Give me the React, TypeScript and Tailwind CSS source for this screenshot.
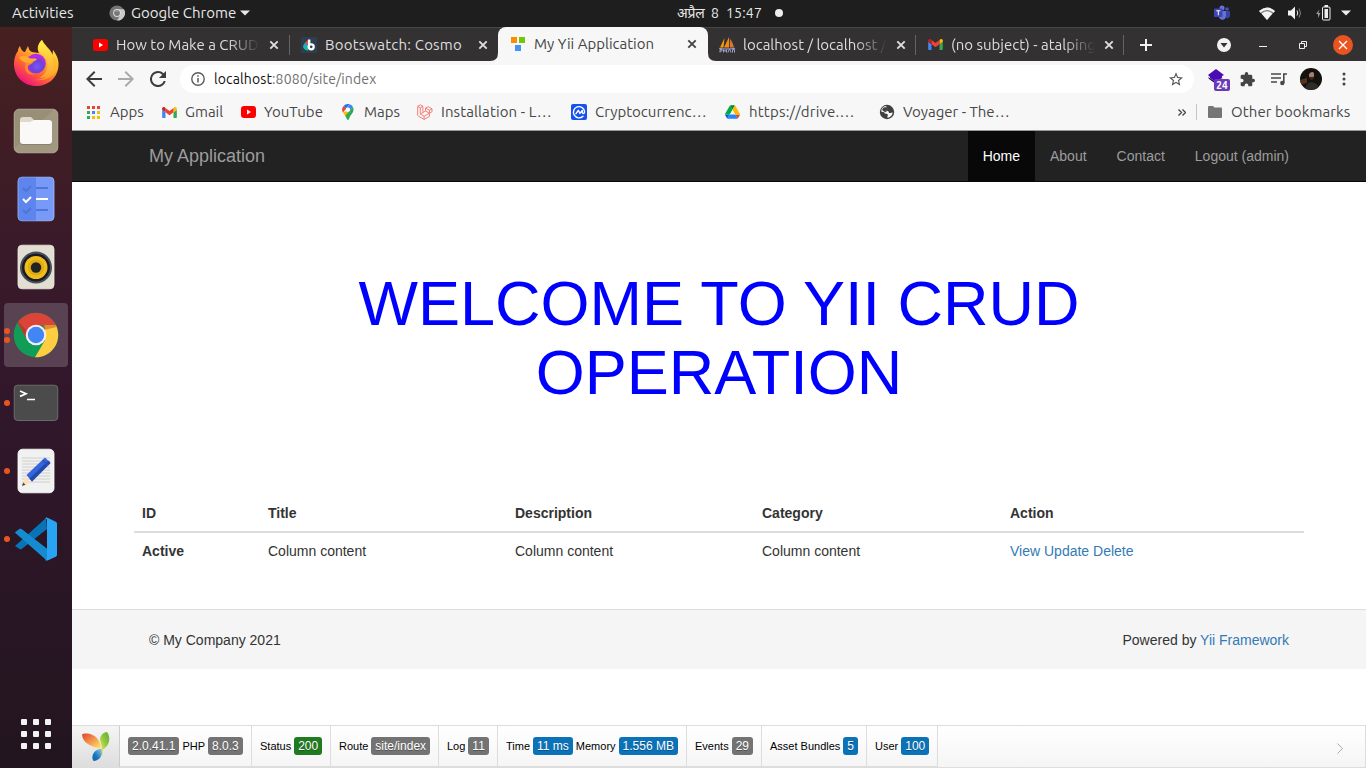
import React from "react";

type P = { className?: string };
type LabelProps = { children: React.ReactNode; className?: string };

const ui = "font-['Ubuntu','Noto_Sans',sans-serif] whitespace-pre";

function Label({ children, className = "" }: LabelProps) {
  return <span className={`${ui} ${className}`}>{children}</span>;
}

/* ---------- small icons ---------- */

function YouTube({ className }: P) {
  return (
    <svg viewBox="0 0 15 12" className={className}>
      <rect width="15" height="12" rx="3" fill="#f00" />
      <path d="M6 3.6 10 6 6 8.4Z" fill="#fff" />
    </svg>
  );
}

function Gmail({ className }: P) {
  return (
    <svg viewBox="52 42 88 66" className={className}>
      <path fill="#4285f4" d="M58 108h14V74L52 59v43c0 3.32 2.69 6 6 6" />
      <path fill="#34a853" d="M120 108h14c3.32 0 6-2.69 6-6V59l-20 15" />
      <path fill="#fbbc04" d="M120 48v26l20-15v-8c0-7.42-8.47-11.65-14.4-7.2" />
      <path fill="#ea4335" d="M72 74V48l24 18 24-18v26L96 92" />
      <path fill="#c5221f" d="M52 51v8l20 15V48l-5.600-4.200c-5.940-4.450-14.400-.22-14.400 7.200" />
    </svg>
  );
}

function Bootswatch() {
  return (
    <svg viewBox="0 0 16 16" className="size-4 shrink-0">
      <rect width="16" height="16" rx="1" fill="#2c3e50" />
      <path d="M7 2.500 4 6l3 2Z" fill="#e95420" />
      <path d="M4 5.500 2 9l5 1V8Z" fill="#3498db" />
      <path d="M2 9l5-.5v5C4.500 13.500 2 11.500 2 9Z" fill="#18bc9c" />
      <path d="M8.200 2.500v8" stroke="#fff" strokeWidth="2.400" />
      <circle cx="10.200" cy="9.800" r="2.500" fill="#2c3e50" stroke="#fff" strokeWidth="2.300" />
    </svg>
  );
}

function YiiSquares() {
  return (
    <svg viewBox="0 0 16 16" className="size-4 shrink-0">
      <path fill="#ff8c00" d="M1 1h6v6H1z" />
      <path fill="#73c800" d="M9 1h6v6H9z" />
      <path fill="#4195f5" d="M5 9h6v6H5z" />
    </svg>
  );
}

function PhpMyAdmin() {
  return (
    <svg viewBox="0 0 16 16" className="size-4 shrink-0">
      <path d="M5.500 1 1 10.500h3.500Z" fill="#f89c0e" />
      <path d="M10 0 5 10.500h5Z" fill="#f58a12" />
      <path d="M10.800 1.500c2 2.500 3.200 5 4.200 9h-4.200Z" fill="#d9782d" />
      <path d="M0 11.300c5 1 11 .8 16 0M1 15.500v-3h2v1.500H1m3.500 1.500v-3l1.500 2 1.500-2v3m1.500 0 1-3h1l1 3m1.500 0v-3h2v3" fill="none" stroke="#9c9dc8" strokeWidth="1" />
    </svg>
  );
}

function CloseX({ className = "" }: P) {
  return (
    <svg viewBox="0 0 10 10" className={`size-[10px] shrink-0 ${className}`}>
      <path d="m1.300 1.300 7.400 7.400m0-7.400L1.300 8.700" fill="none" stroke="currentColor" strokeWidth="1.900" />
    </svg>
  );
}

function ChromeMono() {
  return (
    <svg viewBox="0 0 16 16" className="size-4">
      <circle cx="8" cy="8" r="7.600" fill="#757575" />
      <path d="M8 4.200h7A7.600 7.600 0 0 1 8 15.600L11.300 10Z" fill="#c9c9c9" />
      <circle cx="8" cy="8" r="3.900" fill="#ddd" />
      <circle cx="8" cy="8" r="2.900" fill="#777" />
      <path d="M6.500 6.500a2 2 0 0 1 3 0" stroke="#aaa" fill="none" />
    </svg>
  );
}

function MapPin() {
  return (
    <svg viewBox="0 0 12 16" className="h-4 w-3">
      <path d="M6 0a5.700 5.700 0 0 0-4.400 2L4 4.200 7.700.3A6 6 0 0 0 6 0Z" fill="#1a73e8" />
      <path d="M1.600 2A5.700 5.700 0 0 0 .9 8.500L4.300 4.400Z" fill="#ea4335" />
      <path d="M7.700.3 4.200 4.500A2.200 2.200 0 0 1 7.700 7.100L11 3.100A5.700 5.700 0 0 0 7.700.3Z" fill="#4285f4" />
      <path d="M4.200 7.200.9 8.500c.5 1 1.500 2.200 2.200 3.200L7.700 7.100A2.200 2.200 0 0 1 4.200 7.200Z" fill="#fbbc04" />
      <path d="M11 3.100 3.100 11.700C4.500 13.500 5 16 6 16c1.100 0 1.300-3 3.200-5.200C11 8.500 12.300 6 11 3.100Z" fill="#34a853" />
      <circle cx="6" cy="5.700" r="2.100" fill="#fff" />
    </svg>
  );
}

function Laravel() {
  return (
    <svg viewBox="0 0 16 16" className="size-4">
      <path d="m.7 2.300 2.600-1.500 2.600 1.500v6.200l2.600-1.500V4.100l2.700-1.500 3.800 2.200v3l-2.600 1.500v3.100l-5.300 3-5.700-3.200-.7-.8Zm0 0 2.600 1.500 2.600-1.500M3.300 3.800v6.200l2.600-1.500m-2.600 1.500 3.800 2.200 5.300-3-3.900-2.200m3.900 2.200V6.200l2.600-1.400m-2.600 1.400L8.500 4.100M7.100 12.200v3.200" fill="none" stroke="#f4736b" strokeWidth=".9" />
    </svg>
  );
}

function Coin() {
  return (
    <svg viewBox="0 0 16 16" className="size-4">
      <rect width="16" height="16" rx="2" fill="#1652f0" />
      <path d="M12 12.200a5.600 5.600 0 1 1 1.600-4.400c0 2-2.300 2.200-2.300.4V6.500L9 9.400 7.300 6.300 5 9.700" fill="none" stroke="#fff" strokeWidth="1.400" strokeLinecap="round" strokeLinejoin="round" />
    </svg>
  );
}

function Drive() {
  return (
    <svg viewBox="0 0 87.300 78" className="h-[14px] w-[15px]">
      <path d="m6.600 66.850 3.850 6.650c.8 1.400 1.950 2.500 3.300 3.300L27.500 53H0c0 1.550.4 3.100 1.200 4.500z" fill="#0066da" />
      <path d="M43.650 25 29.900 1.200a9 9 0 0 0-3.300 3.300L1.200 48.500A9 9 0 0 0 0 53h27.500z" fill="#00ac47" />
      <path d="M73.550 76.800a9 9 0 0 0 3.300-3.300l9.250-16A9 9 0 0 0 87.300 53H59.800l5.850 11.500z" fill="#ea4335" />
      <path d="M43.650 25 57.400 1.200C56.050.4 54.500 0 52.900 0H34.400c-1.600 0-3.150.45-4.500 1.200z" fill="#00832d" />
      <path d="M59.800 53H27.500L13.750 76.800c1.350.8 2.900 1.200 4.500 1.200h50.800c1.600 0 3.150-.45 4.500-1.200z" fill="#2684fc" />
      <path d="M73.400 26.500 60.700 4.500a9 9 0 0 0-3.300-3.300L43.650 25 59.800 53h27.450c0-1.550-.4-3.100-1.200-4.500z" fill="#ffba00" />
    </svg>
  );
}

function Globe() {
  return (
    <svg viewBox="0 0 16 16" className="size-4">
      <circle cx="8" cy="8" r="7.200" fill="#3f3f3f" />
      <path d="M9 3.600c0 1.700-3.600 1-3.600 2.300 0 .9 3.600.6 4.100 1.500.4.800.2 1.700 1.700 1.700 1 0 1.200-.6 2.500-.6-.4 2.700-2.200 4.700-4.700 5.200-.9-.3-.8-1.500-.2-2.300.5-1.200-.8-1.700-2-1.700-1.500 0-1-1.500-2.500-1.700l-2-.3c-.2-3 1.600-5 3.900-5.600Z" fill="#f7f7f7" />
      <path d="M4.500 3.500 9 3l.3 1.500-2.800.7-.8 1 2.500.8-2 1.200L3 6Z" fill="#3f3f3f" />
    </svg>
  );
}

/* ---------- dock icons ---------- */

function Firefox() {
  return (
    <svg viewBox="0 0 46 48" className="h-12 w-[46px]">
      <defs>
        <linearGradient id="ffBody" x1="0.800" y1="0.100" x2="0.250" y2="0.950">
          <stop offset="0" stopColor="#ffe43d" />
          <stop offset=".35" stopColor="#ffb12c" />
          <stop offset=".65" stopColor="#ff6534" />
          <stop offset="1" stopColor="#f0147a" />
        </linearGradient>
        <radialGradient id="ffGlobe" cx=".55" cy=".65">
          <stop offset="0" stopColor="#7a55ff" />
          <stop offset=".6" stopColor="#6e42d4" />
          <stop offset="1" stopColor="#b72ae8" />
        </radialGradient>
        <linearGradient id="ffTail" x1="0" y1="0" x2="0" y2="1">
          <stop offset="0" stopColor="#fff14c" />
          <stop offset="1" stopColor="#ffa02d" />
        </linearGradient>
      </defs>
      <path d="M1 26C.8 20 3 14 5 12c0-3 1.500-4 2-5 1 4 3 6 5 6l3-6c1 4 2 5 4 6l7 1C23 9 26 3 29 1c2 5 9 9 10.500 15l.5-5c3 4 6 9 5.500 15C45 39 35 47 23 47S1.500 38 1 26Z" fill="url(#ffBody)" />
      <path d="M29 1c-4 4-5 9-2 13 6 4 9 9 7 15-1 5-4 8-8 10 9 0 15-6 16-14 1-10-10-15-13-24Z" fill="url(#ffTail)" />
      <path d="M39 16c5 13-3 25-17 25 10 1 20-3 22-12 1-6-2-10-5-13Z" fill="#ffb52a" opacity=".7" />
      <circle cx="23" cy="24.500" r="9.800" fill="url(#ffGlobe)" />
      <path d="M13 22c3 1 5 0 7 1 0 2-3 2-5 4-1 4 2 8 7 8-6 2-10-2-10-7Z" fill="#ff8a2b" />
      <path d="M6 18c4-2 8-1 10 1 3 1 6 0 8 1-2 3-6 3-8 4-4 0-8-2-10-6Z" fill="#ffab2e" />
    </svg>
  );
}

function Files() {
  return (
    <svg viewBox="0 0 46 46" className="size-[46px]">
      <rect x="1.200" y="1.200" width="43.600" height="43.600" rx="5" fill="#a09880" stroke="#bdb7a6" strokeWidth=".8" />
      <path d="M2 40 40 2H6Q2 2 2 6Z" fill="#91886f" opacity=".6" />
      <path d="M7 12q0-3 3-3h8l4 4v7H7Z" fill="#ded9ca" />
      <path d="M7 15h10l4-3h15q3 0 3 3v19q0 3-3 3H10q-3 0-3-3Z" fill="#6d654f" opacity=".45" />
      <path d="M7 14h10l4-2h15q3 0 3 3v18q0 3-3 3H10q-3 0-3-3Z" fill="#faf9f7" />
    </svg>
  );
}

function Todo() {
  return (
    <svg viewBox="0 0 38 46" className="h-[46px] w-[38px]">
      <rect x="1" y="1.200" width="36" height="43.600" rx="4" fill="#779af8" stroke="#a4bffd" strokeWidth=".8" />
      <path d="M1.500 5q0-3.500 4-3.500h13.500v43H5.500q-4 0-4-4Z" fill="#5e85ee" />
      <g fill="none" strokeWidth="2">
        <path d="m6 12 3 3 5-5m5 2h12M6 34l3 3 5-5m5 2h12" stroke="#4f76d6" />
        <path d="m6 23 3 3 5-5m5 2h12" stroke="#fff" />
      </g>
    </svg>
  );
}

function Speaker() {
  return (
    <svg viewBox="0 0 38 46" className="h-[46px] w-[38px]">
      <rect x="1" y="1.200" width="36" height="43.600" rx="4" fill="#e2ded2" stroke="#eeeadf" strokeWidth=".8" />
      <circle cx="19" cy="23.500" r="16" fill="#4b5058" />
      <circle cx="19" cy="23.500" r="14" fill="#191b2b" />
      <circle cx="19" cy="23.500" r="11.500" fill="#f1bd16" />
      <circle cx="19" cy="23.500" r="8" fill="#deac1a" />
      <circle cx="19" cy="23.500" r="5.200" fill="#222" />
    </svg>
  );
}

function Chrome() {
  return (
    <svg viewBox="0 0 46 46" className="size-[46px]">
      <circle cx="23" cy="23" r="22.300" fill="#109d58" />
      <path d="M4.500 10.700A22.300 22.300 0 0 1 42.800 13H23L14 28Z" fill="#db4437" />
      <path d="M42.800 13A22.300 22.300 0 0 1 22 45.300L32 28.200 31.500 13Z" fill="#ffcd40" />
      <path d="M23 13h19.800l.7 2L31 18Z" fill="#b5562b" opacity=".5" />
      <path d="m14 28-9.500-17.300 1-1L15 20Z" fill="#8f352e" opacity=".5" />
      <circle cx="23" cy="23" r="10.300" fill="#f1f1f1" />
      <circle cx="23" cy="23" r="8.200" fill="#4285f4" />
    </svg>
  );
}

function Terminal() {
  return (
    <svg viewBox="0 0 46 38" className="h-[38px] w-[46px]">
      <rect x="1.200" y="1.200" width="43.600" height="35.300" rx="3.500" fill="#4b4b4b" stroke="#777" strokeWidth=".8" />
      <path d="m7 7 6 2.700-6 2.700M14 15.500h8" fill="none" stroke="#fff" strokeWidth="1.700" />
    </svg>
  );
}

function Editor() {
  return (
    <svg viewBox="0 0 38 46" className="h-[46px] w-[38px]">
      <rect x="1" y="1.200" width="36" height="43.600" rx="4.500" fill="#f1f1f1" stroke="#fff" strokeWidth=".8" />
      <path d="M5 10h28M5 13h28M5 16h28M5 19h28M5 22h28M5 25h28M5 28h28M5 31h28M5 34h28" stroke="#cecece" />
      <path d="m5 38 3-9 6 6Z" fill="#ffe0bd" />
      <path d="m5 38 1.200-3.500 2.300 2.300Z" fill="#444" />
      <path d="M9.500 27 28 9.500l5.500 5.500-18.500 18.500Z" fill="#3465dd" />
      <path d="m12.500 30.500 19-18 2 2.500L15 33.500Z" fill="#214aaa" />
      <path d="m25.500 12 5.500 5.500" stroke="#2b55bd" strokeWidth="1.500" />
    </svg>
  );
}

function VSCode() {
  return (
    <svg viewBox="0 0 44 44" className="size-11">
      <path d="M1 15.500 5.500 12q1-.6 2.200.2L33 32v11Z" fill="#0a78bd" />
      <path d="M1 29 32 1l1 11L7.700 32q-1.200.8-2.200 0L1 29Z" fill="#0873b5" />
      <path d="M1 15.500 5.500 12q1-.6 2.200.2L33 31.700V43q-1 0-2.500-1.500Z" fill="#168bd0" />
      <path d="M31 1.500q1-1.300 2.500-.8l8.300 4q1.200.6 1.200 2v31q0 1.400-1.200 2l-8.300 3.700q-1.500.6-2.500-.7 2 .5 2-1.700V3.300q0-2-2-1.800Z" fill="#29a4f4" />
    </svg>
  );
}

function YiiLogo() {
  return (
    <svg viewBox="0 0 29 31" className="h-[31px] w-[29px]">
      <defs>
        <linearGradient id="yo" x1="0" y1="0" x2="1" y2="1"><stop stopColor="#df422b" /><stop offset=".45" stopColor="#f48e4c" /><stop offset="1" stopColor="#fff06b" /></linearGradient>
        <linearGradient id="yg" x1="1" y1="0" x2="0" y2="1"><stop stopColor="#5eac37" /><stop offset=".5" stopColor="#92c83e" /><stop offset="1" stopColor="#e2e65b" /></linearGradient>
        <linearGradient id="yb" x1="1" y1="0" x2="0" y2="1"><stop stopColor="#9bc9e8" /><stop offset=".6" stopColor="#1777bc" /><stop offset="1" stopColor="#0864a8" /></linearGradient>
      </defs>
      <path d="M1 3.500C4 1.500 13 2.500 17 8.500c2 3 3.200 6 3.200 9.500C12 16 1.500 13 1 3.500Z" fill="url(#yo)" />
      <path d="M26 1c4 5 3 14-5 18 .2-5-1.500-8-2-10 0-4 3-8 7-8Z" fill="url(#yg)" />
      <path d="M21 18c1 7-3 12-8.500 12-3.500-5 1.500-13 8.500-12Z" fill="url(#yb)" />
      <path d="m20 18 1.500 1-.3 7Z" fill="#c4d84b" />
    </svg>
  );
}

/* ---------- desktop ---------- */

function TopBar() {
  return (
    <header className="flex h-[27px] shrink-0 items-center bg-[#1e1e1e] pb-px text-[15px] text-[#e8e8e8]">
      <Label className="w-[109px] pt-px pl-3">Activities</Label>
      <ChromeMono />
      <Label className="w-[109px] pt-px pl-[6px]">Google Chrome</Label>
      <svg viewBox="0 0 10 6" className="ml-[6px] h-[6px] w-[10px]"><path d="M0 .5h10L5 5.500Z" fill="#e8e8e8" /></svg>
      <div className="ml-[427px] flex w-[86px] items-center text-[14px]">
        <Label className="w-[34px] tracking-[-0.200px]">अप्रैल</Label>
        <Label className="w-[15px]">8</Label>
        <Label className="tracking-[0.200px]">15:47</Label>
      </div>
      <i className="ml-[12px] size-2 rounded-full bg-[#eee]" />
      <svg viewBox="0 0 16 16" className="ml-[431px] size-4 shrink-0">
        <circle cx="8" cy="3" r="2.500" fill="#6772dd" /><circle cx="13" cy="4" r="1.800" fill="#4953b5" />
        <path d="M11 6h5v5q-1 3-4 2Z" fill="#3941a4" /><path d="M4 6h8v5q-1 5-5 3.500Q4 13 4 6Z" fill="#6670d8" />
        <rect y="3.500" width="8.500" height="8.500" rx="1" fill="#3e45b4" /><path d="M2.300 5.800h4M4.300 5.800v4.500" stroke="#fff" />
      </svg>
      <svg viewBox="0 0 16 13" className="ml-[29px] h-[13px] w-4"><path d="M0 4Q8-3 16 4L8 13Z" fill="#777" /><path d="M2.500 6.500Q8 2 13.500 6.500L8 13Z" fill="#f2f2f2" /><path d="M0 4Q8-3 16 4l-1.500 1.700Q8 .5 1.500 5.700Z" fill="#f2f2f2" /></svg>
      <svg viewBox="0 0 16 14" className="ml-[12px] h-[14px] w-4"><path d="M1 4.500h3L8 .5v13l-4-4H1Z" fill="#f2f2f2" /><path d="M10 4.500q1.500 2.500 0 5" fill="none" stroke="#eee" /><path d="M12 2.500q3 4.500 0 9" fill="none" stroke="#888" /></svg>
      <svg viewBox="0 0 15 16" className="ml-[13px] h-4 w-[15px]"><path d="M3.500 4.500 0 9h2v4l2.500-5h-2Z" fill="#999" /><rect x="6.500" y="2" width="7.500" height="13" rx="1" fill="none" stroke="#eee" /><path d="M8.500 4h3.500v9H8.500ZM8.500 0h3.500v2H8.500z" fill="#eee" /></svg>
      <svg viewBox="0 0 10 6" className="ml-[10px] h-[6px] w-[10px]"><path d="M0 .5h10L5 5.500Z" fill="#eee" /></svg>
    </header>
  );
}

function DockItem({ children, dots = 0, active = false }: { children: React.ReactNode; dots?: number; active?: boolean }) {
  return (
    <div className="flex h-[68px] w-full items-center">
      <div className={`ml-1 flex h-16 w-16 items-center rounded-[4px] ${active ? "bg-[#594353]" : ""}`}>
        <div className="flex w-2 shrink-0 flex-col gap-[3px]">
          {Array.from({ length: dots }, (_, i) => <i key={i} className="size-[6px] rounded-full bg-[#e95420]" />)}
        </div>
        <div className="flex flex-1 justify-center pr-2">{children}</div>
      </div>
    </div>
  );
}

function Dock() {
  return (
    <aside className="flex w-[72px] shrink-0 flex-col bg-linear-to-b from-[#472020] via-[#33172c] via-45% to-[#22151f] pt-[2px]">
      <DockItem><Firefox /></DockItem>
      <DockItem><Files /></DockItem>
      <DockItem><Todo /></DockItem>
      <DockItem><Speaker /></DockItem>
      <DockItem dots={2} active><Chrome /></DockItem>
      <DockItem dots={1}><Terminal /></DockItem>
      <DockItem dots={1}><Editor /></DockItem>
      <DockItem dots={1}><VSCode /></DockItem>
      <div className="mt-auto mb-[19px] ml-[21px] grid w-[30px] grid-cols-3 gap-[6px]">
        {Array.from({ length: 9 }, (_, i) => <i key={i} className="size-[6px] rounded-[1px] bg-[#f2f2f2]" />)}
      </div>
    </aside>
  );
}

/* ---------- browser ---------- */

type TabProps = { icon: React.ReactNode; children: React.ReactNode; width: string; sep?: boolean; fade?: boolean; pad?: string; tracking?: string };

function Tab({ icon, children, width, sep, fade, pad = "pl-3", tracking = "" }: TabProps) {
  return (
    <div className={`flex shrink-0 items-center ${width} ${pad}`}>
      <span className="flex w-4 shrink-0 justify-center">{icon}</span>
      <span className={`ml-2 w-[144px] overflow-hidden ${fade ? "[mask-image:linear-gradient(to_right,#000_78%,transparent)]" : ""}`}>
        <Label className={`text-[15px] ${tracking}`}>{children}</Label>
      </span>
      <CloseX className="ml-[9px]" />
      {sep && <i className="ml-auto h-5 w-px bg-[#656364]" />}
    </div>
  );
}

function TabStrip() {
  return (
    <div className="flex h-[34px] shrink-0 items-stretch border-t border-[#484647] bg-[#333132] pl-2 text-[#dedede]">
      <Tab width="w-[210px]" sep fade icon={<YouTube className="h-3 w-[15px]" />}>How to Make a CRUD</Tab>
      <Tab width="w-[208px]" pad="pl-[11px]" tracking="tracking-[0.200px]" icon={<Bootswatch />}>Bootswatch: Cosmo</Tab>
      <div className="relative -mt-px flex w-[210px] rounded-t-[8px] bg-[#f7f7f7] text-[#444]">
        <svg viewBox="0 0 8 8" className="absolute bottom-0 -left-2 size-2"><path d="M8 0v8H0q8 0 8-8Z" fill="#f7f7f7" /></svg>
        <svg viewBox="0 0 8 8" className="absolute -right-2 bottom-0 size-2"><path d="M0 0v8h8Q0 8 0 0Z" fill="#f7f7f7" /></svg>
        <Tab width="w-[210px]" icon={<YiiSquares />}>My Yii Application</Tab>
      </div>
      <Tab width="w-[208px]" pad="pl-[11px]" sep fade icon={<PhpMyAdmin />}>localhost / localhost / </Tab>
      <Tab width="w-[208px]" pad="pl-[11px]" sep fade icon={<Gmail className="h-[11px] w-[15px]" />}>(no subject) - atalping</Tab>
      <div className="flex flex-1 items-center pl-4 text-[#f2f2f2]">
        <svg viewBox="0 0 12 12" className="size-3"><path d="M6 0v12M0 6h12" stroke="currentColor" strokeWidth="2" /></svg>
        <svg viewBox="0 0 14 14" className="ml-[65px] size-[14px]"><circle cx="7" cy="7" r="7" fill="#f2f2f2" /><path d="M3.500 5h7L7 9.500Z" fill="#333132" /></svg>
        <i className="mt-[4px] ml-[28px] h-px w-2 bg-[#f2f2f2]" />
        <svg viewBox="0 0 8 8" className="ml-[32px] size-2"><path d="M.5 2.500h5v5h-5ZM2.500 2.500v-2h5v5h-2" fill="none" stroke="#eee" /></svg>
        <span className="ml-[26px] flex size-5 items-center justify-center rounded-full bg-[#e95420]">
          <svg viewBox="0 0 10 10" className="size-[10px]"><path d="m1 1 8 8M9 1 1 9" stroke="#fff" strokeWidth="1.300" /></svg>
        </span>
      </div>
    </div>
  );
}

function Toolbar() {
  return (
    <div className="flex h-9 shrink-0 items-center bg-[#f7f7f7] pl-[14px] text-[#444]">
      <svg viewBox="4 4 16 16" className="size-4"><path d="M20 11H7.830l5.590-5.590L12 4l-8 8 8 8 1.410-1.410L7.830 13H20z" fill="#3c3c3c" /></svg>
      <svg viewBox="4 4 16 16" className="ml-4 size-4 -scale-x-100"><path d="M20 11H7.830l5.590-5.590L12 4l-8 8 8 8 1.410-1.410L7.830 13H20z" fill="#aaa" /></svg>
      <svg viewBox="4 4 16 16" className="ml-4 size-4"><path d="M17.650 6.350A7.950 7.950 0 0 0 12 4a8 8 0 1 0 7.730 10h-2.080A6 6 0 1 1 12 6c1.660 0 3.140.690 4.220 1.780L13 11h7V4z" fill="#3c3c3c" /></svg>
      <div className="ml-[14px] flex h-7 w-[1014px] items-center rounded-full bg-white pl-[11px]">
        <svg viewBox="0 0 14 14" className="size-[14px]"><circle cx="7" cy="7" r="6.200" fill="none" stroke="#5b5b5b" strokeWidth="1.400" /><path d="M7 6v4.500M7 3.300v1.500" stroke="#5b5b5b" strokeWidth="1.500" /></svg>
        <Label className="ml-[9px] text-[14px] tracking-[0.120px] text-[#707070]"><span className="text-[#111]">localhost</span>:8080/site/index</Label>
        <svg viewBox="2 2 20 19" className="mr-[11px] ml-auto h-[14px] w-[14px]"><path d="m22 9.240-7.190-.620L12 2 9.190 8.630 2 9.240l5.460 4.730L5.820 21 12 17.270 18.180 21l-1.630-7.030zM12 15.400l-3.760 2.270 1-4.280-3.320-2.880 4.380-.380L12 6.100l1.710 4.040 4.380.380-3.320 2.880 1 4.280z" fill="#555" /></svg>
      </div>
      <div className="relative ml-[14px] h-[22px] w-[22px]">
        <svg viewBox="0 0 16 16" className="mt-px size-4"><path d="m8 0 8 6-2 1v2l-6 4-6-4V8L0 6Z" fill="#4a0ab4" /><path d="m0 8 8 5 7-4-7 6-7-5Z" fill="#2a0077" /></svg>
        <Label className="absolute top-[11px] left-[6px] flex h-3 w-4 items-center justify-center rounded-[2px] bg-[#6a3ab8] text-[10px] font-bold text-white">24</Label>
      </div>
      <svg viewBox="1 1 22 22" className="ml-[10px] size-[15px]"><path d="M20.500 11H19V7a2 2 0 0 0-2-2h-4V3.500a2.500 2.500 0 0 0-5 0V5H4a2 2 0 0 0-2 2v3.800h1.500a2.700 2.700 0 0 1 0 5.400H2V20a2 2 0 0 0 2 2h3.800v-1.500a2.700 2.700 0 0 1 5.400 0V22H17a2 2 0 0 0 2-2v-4h1.500a2.500 2.500 0 0 0 0-5" fill="#444" /></svg>
      <svg viewBox="0 0 16 14" className="ml-4 h-[14px] w-4"><path d="M0 2h10M0 6h10M0 10h6" stroke="#484848" strokeWidth="1.500" /><path d="M12.800 11V2H16" fill="none" stroke="#484848" strokeWidth="1.600" /><circle cx="11.300" cy="11" r="2.200" fill="#484848" /></svg>
      <svg viewBox="0 0 22 22" className="ml-[13px] size-[22px]">
        <defs><clipPath id="av"><circle cx="11" cy="11" r="11" /></clipPath></defs>
        <g clipPath="url(#av)"><path fill="#15110f" d="M0 0h22v22H0z" /><path d="M0 12 7 10v5l-7 2Z" fill="#543420" /><path d="M5 22q1-8 7-8 6 1 8 8Z" fill="#2d2c29" /><ellipse cx="11.500" cy="7" rx="2.600" ry="3.800" fill="#a77f68" /><path d="M8 7q0-6 4-6t4 6l-1-2q-3-2-5 0Z" fill="#14100e" /><path d="M9 8.500q2.500 1 5 0 0 3-2.500 3.500Q9.500 11.500 9 8.500Z" fill="#382820" /></g>
      </svg>
      <svg viewBox="0 0 4 14" className="ml-[20px] h-[14px] w-1"><circle cx="2" cy="2" r="1.500" fill="#444" /><circle cx="2" cy="7" r="1.500" fill="#444" /><circle cx="2" cy="12" r="1.500" fill="#444" /></svg>
    </div>
  );
}

function Bookmark({ icon, text, width, gap = "gap-2", tracking = "" }: { icon: React.ReactNode; text: string; width: string; gap?: string; tracking?: string }) {
  return <div className={`flex shrink-0 items-center ${gap} ${width}`}>{icon}<Label className={tracking}>{text}</Label></div>;
}

function Bookmarks() {
  const apps = ["fill-[#ea4335]", "fill-[#ea4335]", "fill-[#ea4335]", "fill-[#34a853]", "fill-[#4285f4]", "fill-[#fbbc04]", "fill-[#34a853]", "fill-[#fbbc04]", "fill-[#fbbc04]"];
  return (
    <div className="flex h-[33px] shrink-0 items-center bg-[#f7f7f7] pb-[3px] pl-[15px] text-[15px] text-[#484848]">
      <Bookmark width="w-[75px]" gap="gap-[10px]" text="Apps" icon={<svg viewBox="0 0 13 13" className="size-[13px]">{apps.map((c, i) => <rect key={i} x={(i % 3) * 5} y={Math.floor(i / 3) * 5} width="3" height="3" className={c} />)}</svg>} />
      <Bookmark width="w-[79px]" text="Gmail" icon={<Gmail className="h-[11px] w-[15px]" />} />
      <Bookmark width="w-[101px]" text="YouTube" icon={<YouTube className="h-3 w-[15px]" />} />
      <Bookmark width="w-[75px]" gap="gap-[10px]" text="Maps" icon={<MapPin />} />
      <Bookmark width="w-[154px]" tracking="tracking-[0.100px]" text="Installation - L…" icon={<Laravel />} />
      <Bookmark width="w-[154px]" text="Cryptocurrenc…" icon={<Coin />} />
      <Bookmark width="w-[154px]" gap="gap-[9px]" tracking="tracking-[0.200px]" text="https://drive.…" icon={<Drive />} />
      <Bookmark width="w-[299px]" text="Voyager - The…" icon={<Globe />} />
      <svg viewBox="0 0 8 7" className="h-[7px] w-2"><path d="m.5.5 3 3-3 3m4-6 3 3-3 3" fill="none" stroke="#444" strokeWidth="1.400" /></svg>
      <i className="mr-[11px] ml-[10px] h-4 w-px bg-[#c5c5c5]" />
      <svg viewBox="0 0 14 12" className="h-3 w-[14px]"><path d="M1 0h4l1.500 1.500H13q1 0 1 1V11q0 1-1 1H1q-1 0-1-1V1q0-1 1-1Z" fill="#757575" /></svg>
      <Label className="ml-[9px] tracking-[0.100px]">Other bookmarks</Label>
    </div>
  );
}

/* ---------- page ---------- */

function Navbar() {
  return (
    <nav className="h-[52px] shrink-0 border-t border-b border-t-[#999] border-b-[#080808] bg-[#222] px-[62px] text-[14px] text-[#9d9d9d]">
      <div className="flex h-[50px] items-stretch justify-between">
        <a className="flex items-center pl-[15px] text-[18px]">My Application</a>
        <div className="flex items-stretch">
          <a className="flex items-center bg-[#080808] px-[15px] text-white">Home</a>
          <a className="flex items-center px-[15px]">About</a>
          <a className="flex items-center px-[15px]">Contact</a>
          <a className="flex items-center px-[15px]">Logout (admin)</a>
        </div>
      </div>
    </nav>
  );
}

function Content() {
  return (
    <main className="h-[427px] shrink-0 px-[62px] pt-[87px] text-[14px] leading-5 text-[#333]">
      <h1 className="px-[200px] text-center text-[63px] leading-[69px] text-[#0000ff]">WELCOME TO YII CRUD<br />OPERATION</h1>
      <table className="mt-[87px] w-full table-fixed text-left">
        <colgroup><col className="w-[126px]" /><col className="w-[247px]" /><col className="w-[247px]" /><col className="w-[248px]" /><col /></colgroup>
        <thead><tr className="h-[38px] border-b-2 border-[#ddd]">{["ID", "Title", "Description", "Category", "Action"].map((h) => <th key={h} className="px-2 font-bold">{h}</th>)}</tr></thead>
        <tbody><tr className="h-9">
          <th className="px-2 font-bold">Active</th>
          <td className="px-2">Column content</td><td className="px-2">Column content</td><td className="px-2">Column content</td>
          <td className="px-2 text-[#337ab7]">View Update Delete</td>
        </tr></tbody>
      </table>
    </main>
  );
}

function Badge({ children, color = "bg-[#737373]" }: LabelProps & { color?: string }) {
  return <span className={`inline-flex h-[18px] items-center rounded-[3px] px-1 text-[12px] text-white [text-shadow:0_1px_0_rgba(0,0,0,0.3)] ${color}`}>{children}</span>;
}

function Cell({ children, width }: { children: React.ReactNode; width: string }) {
  return <div className={`flex shrink-0 items-center gap-[3px] border-r border-b border-[#ddd] pl-2 ${width}`}>{children}</div>;
}

function DebugBar() {
  const blue = "bg-[#0b72b8]";
  return (
    <div className="mt-auto flex h-[43px] shrink-0 items-stretch border border-[#ddd] border-l-0 bg-linear-to-b from-white to-[#f5f5f5] text-[11px] text-black">
      <div className="flex w-12 shrink-0 items-center justify-center border-r border-[#ccc] bg-linear-to-b from-[#f5f5f5] to-[#ddd]"><YiiLogo /></div>
      <Cell width="w-[132px]"><Badge>2.0.41.1</Badge>PHP<Badge>8.0.3</Badge></Cell>
      <Cell width="w-[79px]">Status<Badge color="bg-[#207a20]">200</Badge></Cell>
      <Cell width="w-[108px]">Route<Badge>site/index</Badge></Cell>
      <Cell width="w-[59px]">Log<Badge>11</Badge></Cell>
      <Cell width="w-[189px]">Time<Badge color={blue}>11 ms</Badge>Memory<Badge color={blue}>1.556 MB</Badge></Cell>
      <Cell width="w-[75px]">Events<Badge>29</Badge></Cell>
      <Cell width="w-[105px]">Asset Bundles<Badge color={blue}>5</Badge></Cell>
      <Cell width="w-[71px]">User<Badge color={blue}>100</Badge></Cell>
      <svg viewBox="0 0 6 11" className="mt-[3px] mr-[22px] ml-auto h-[11px] w-[6px] self-center"><path d="m.5.5 5 5-5 5" fill="none" stroke="#aaa" /></svg>
    </div>
  );
}

export default function App() {
  return (
    <div className="flex h-[768px] w-[1366px] flex-col overflow-hidden bg-white font-['Liberation_Sans',Arial,sans-serif]">
      <TopBar />
      <div className="flex min-h-0 flex-1">
        <Dock />
        <section className="flex w-[1294px] flex-col bg-white">
          <TabStrip />
          <Toolbar />
          <Bookmarks />
          <Navbar />
          <Content />
          <footer className="flex h-[60px] shrink-0 items-center justify-between border-t border-[#ddd] bg-[#f5f5f5] px-[77px] pt-px text-[14px] text-[#333]">
            <p>© My Company 2021</p>
            <p>Powered by <a className="text-[#337ab7]">Yii Framework</a></p>
          </footer>
          <DebugBar />
        </section>
      </div>
    </div>
  );
}
